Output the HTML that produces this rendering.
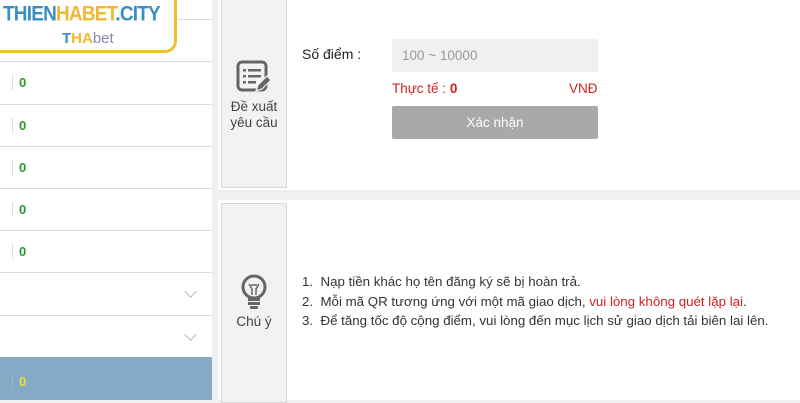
<!DOCTYPE html>
<html><head><meta charset="utf-8"><style>
*{margin:0;padding:0;box-sizing:border-box}
body{width:800px;height:400px;overflow:hidden;background:#f0f0f0;font-family:"Liberation Sans",Arial,sans-serif;position:relative;color:#333}
.sb{position:absolute;left:0;top:0;width:212px;height:400px;background:#fff}
.line{position:absolute;left:0;width:212px;height:1px;background:#dcdcdc}
.logo{position:absolute;left:-10px;top:-10px;width:187px;height:63px;border:3px solid #f0c030;border-top:none;border-left:none;border-radius:0 0 12px 0;background:#fff}
.row{position:absolute;left:12px;font-size:13px;font-weight:bold;color:#2a9a2a;border-left:1px solid #ddd;padding-left:6px;height:15px;line-height:15px}
.chev{position:absolute;left:186px;width:9px;height:9px;border-right:1.5px solid #bbb;border-bottom:1.5px solid #bbb;transform:rotate(45deg)}
.panel{position:absolute;left:218px;width:582px;background:#fff}
.ibox{position:absolute;left:3px;width:66px;background:#f2f2f2;border:1px solid #d8d8d8;text-align:center;font-size:13.5px;color:#444;line-height:16px}
</style></head><body>
<div class="sb">
<div class="logo"></div>
<div style="position:absolute;left:3px;top:4px;font-size:19px;font-weight:bold;letter-spacing:-0.8px;color:#3a8fc0;transform:scaleY(1.1)">THIEN<span style="color:#f0b830">HABET</span>.CITY</div>
<div style="position:absolute;left:62px;top:30px;font-size:15px;font-weight:bold;color:#3a8fc0">T<span style="color:#f0b830">HA</span><span style="font-weight:normal;color:#88a;">bet</span></div>
<div class="line" style="top:19px;left:178px;width:34px"></div>
<div class="line" style="top:61px"></div>
<div class="line" style="top:104px"></div>
<div class="line" style="top:146px"></div>
<div class="line" style="top:188px"></div>
<div class="line" style="top:230px"></div>
<div class="line" style="top:272px"></div>
<div class="line" style="top:315px"></div>
<div class="row" style="top:75px">0</div>
<div class="row" style="top:118px">0</div>
<div class="row" style="top:160px">0</div>
<div class="row" style="top:202px">0</div>
<div class="row" style="top:244px">0</div>
<div class="chev" style="top:287px"></div>
<div class="chev" style="top:330px"></div>
<div style="position:absolute;left:0;top:357px;width:212px;height:43px;background:#85aac6"></div>
<div class="row" style="top:374px;color:#e8e040;border-color:#9bb">0</div>
</div>
<div class="panel" style="top:0;height:190px">
<div class="ibox" style="top:-1px;height:189px">
<svg width="36" height="36" viewBox="0 0 36 36" style="position:absolute;left:14px;top:60px"><rect x="2" y="2" width="28" height="28" rx="4" fill="none" stroke="#666" stroke-width="3"/><g fill="#666"><rect x="7" y="9" width="3" height="2.5"/><rect x="12" y="9" width="13" height="2.5"/><rect x="7" y="15" width="3" height="2.5"/><rect x="12" y="15" width="13" height="2.5"/><rect x="7" y="21" width="3" height="2.5"/><rect x="12" y="21" width="8" height="2.5"/></g><path d="M20 31l2-6 9-9 4 4-9 9z" fill="#666" stroke="#f2f2f2" stroke-width="1.2"/></svg>
<div style="position:absolute;top:99px;width:100%">Đề xuất<br>yêu cầu</div>
</div>
<div style="position:absolute;left:84px;top:46px;font-size:14px;color:#222">Số điểm :</div>
<div style="position:absolute;left:174px;top:39px;width:206px;height:33px;background:#f0f0f0;border-radius:2px;font-size:13.5px;color:#999;padding:9px 10px">100 ~ 10000</div>
<div style="position:absolute;left:174px;top:81px;font-size:13.5px;color:#d02020">Thực tế : <b>0</b></div>
<div style="position:absolute;left:351px;top:81px;font-size:13.5px;color:#d02020">VNĐ</div>
<div style="position:absolute;left:174px;top:106px;width:206px;height:33px;background:#a9a9a9;border-radius:2px;font-size:13.5px;color:#fff;text-align:center;line-height:33px">Xác nhận</div>
</div>
<div class="panel" style="top:200px;height:200px">
<div class="ibox" style="top:3px;height:200px">
<svg width="30" height="38" viewBox="0 0 30 38" style="position:absolute;left:17px;top:70px"><circle cx="15" cy="13" r="11" fill="none" stroke="#666" stroke-width="3"/><path d="M10 10l3 5v6M20 10l-3 5v6M12 11h6" fill="none" stroke="#666" stroke-width="1.5"/><rect x="9" y="24" width="12" height="3" fill="#666"/><rect x="9" y="28" width="12" height="3" fill="#666"/><rect x="11" y="32" width="8" height="3" rx="1" fill="#666"/></svg>
<div style="position:absolute;top:110px;width:100%">Chú ý</div>
</div>
<div style="position:absolute;left:84px;top:72px;font-size:13.3px;line-height:19.5px;color:#333">
<div>1.&nbsp; Nạp tiền khác họ tên đăng ký sẽ bị hoàn trả.</div>
<div>2.&nbsp; Mỗi mã QR tương ứng với một mã giao dịch, <span style="color:#d02020">vui lòng không quét lặp lại</span>.</div>
<div>3.&nbsp; Để tăng tốc độ cộng điểm, vui lòng đến mục lịch sử giao dịch tải biên lai lên.</div>
</div>
</div>
</body></html>
